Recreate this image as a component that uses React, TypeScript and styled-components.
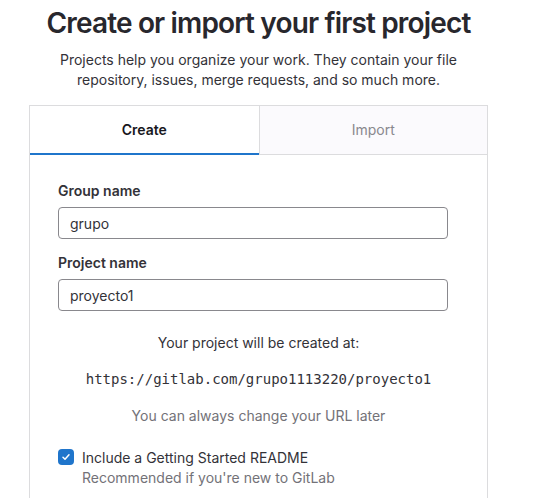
import React from "react";
import styled, { createGlobalStyle } from "styled-components";

const GlobalStyle = createGlobalStyle`
  body {
    margin: 0;
    background: #fff;
    font-family: Inter, "Noto Sans", sans-serif;
    color: #333238;
  }
`;

const Page = styled.div`
  width: 459px;
  margin-left: 29px;
`;

const Title = styled.h1`
  margin: 0;
  padding-top: 6px;
  text-align: center;
  font-size: 28px;
  line-height: 34px;
  font-weight: 600;
  letter-spacing: -0.84px;
  color: #28272d;
`;

const Lead = styled.p`
  margin: 10px 0 15px;
  text-align: center;
  font-size: 14px;
  line-height: 20px;
  color: #333238;
`;

const Card = styled.div`
  border: 1px solid #dcdcde;
  border-bottom: none;
  height: 420px;
`;

const Tabs = styled.div`
  display: grid;
  grid-template-columns: 1fr 1fr;
`;

const Tab = styled.div<{ $active?: boolean }>`
  height: 47px;
  display: flex;
  align-items: center;
  justify-content: center;
  font-size: 14px;
  font-weight: ${(p) => (p.$active ? 600 : 400)};
  color: ${(p) => (p.$active ? "#18171d" : "#89888d")};
  background: ${(p) => (p.$active ? "#fff" : "#fbfafd")};
  border-bottom: ${(p) => (p.$active ? "2px solid #1f75cb" : "1px solid #dcdcde")};
  border-left: ${(p) => (p.$active ? "none" : "1px solid #dcdcde")};
  padding-bottom: ${(p) => (p.$active ? "0" : "1px")};
`;

const Body = styled.div`
  padding: 26px 40px 0 28px;
`;

const Field = styled.div`
  margin-bottom: 14px;
`;

const Label = styled.label`
  display: block;
  font-size: 14px;
  line-height: 20px;
  font-weight: 600;
  margin-bottom: 6px;
  color: #333238;
`;

const Input = styled.input`
  box-sizing: border-box;
  width: 390px;
  height: 32px;
  padding: 0 11px;
  border: 1px solid #89888d;
  border-radius: 4px;
  font-family: inherit;
  font-size: 14px;
  color: #333238;
  outline: none;
`;

const Center = styled.p<{ $muted?: boolean; $mono?: boolean }>`
  margin: 0;
  text-align: center;
  font-size: 14px;
  line-height: 20px;
  color: ${(p) => (p.$muted ? "#737278" : "#333238")};
  font-family: ${(p) => (p.$mono ? '"DejaVu Sans Mono", "Liberation Mono", monospace' : "inherit")};
`;

const Destination = styled.div`
  display: flex;
  flex-direction: column;
  gap: 16px;
  padding-top: 8px;
  margin: 0 -40px 0 -28px;

  & > :last-child {
    margin-top: 1px;
  }
`;

const CheckRow = styled.label`
  display: flex;
  gap: 8px;
  margin-top: 22px;
`;

const Box = styled.span`
  flex: none;
  width: 16px;
  height: 16px;
  margin-top: 1px;
  border-radius: 4px;
  background: #1f75cb;
  display: flex;
  align-items: center;
  justify-content: center;
`;

const CheckText = styled.div`
  font-size: 14px;
  line-height: 20px;
`;

const Help = styled.div`
  color: #737278;
`;

export default function App() {
  return (
    <>
      <GlobalStyle />
      <Page>
        <Title>Create or import your first project</Title>
        <Lead>
          Projects help you organize your work. They contain your file
          <br />
          repository, issues, merge requests, and so much more.
        </Lead>
        <Card>
          <Tabs>
            <Tab $active>Create</Tab>
            <Tab>Import</Tab>
          </Tabs>
          <Body>
            <Field>
              <Label>Group name</Label>
              <Input defaultValue="grupo" />
            </Field>
            <Field>
              <Label>Project name</Label>
              <Input defaultValue="proyecto1" />
            </Field>
            <Destination>
              <Center>Your project will be created at:</Center>
              <Center $mono>https://gitlab.com/grupo1113220/proyecto1</Center>
              <Center $muted>You can always change your URL later</Center>
            </Destination>
            <CheckRow>
              <Box>
                <svg width="10" height="10" viewBox="0 0 10 10" fill="none">
                  <path d="M2 5.2l2 2 4-4.4" stroke="#fff" strokeWidth="1.5" strokeLinecap="round" strokeLinejoin="round" />
                </svg>
              </Box>
              <CheckText>
                Include a Getting Started README
                <Help>Recommended if you're new to GitLab</Help>
              </CheckText>
            </CheckRow>
          </Body>
        </Card>
      </Page>
    </>
  );
}
